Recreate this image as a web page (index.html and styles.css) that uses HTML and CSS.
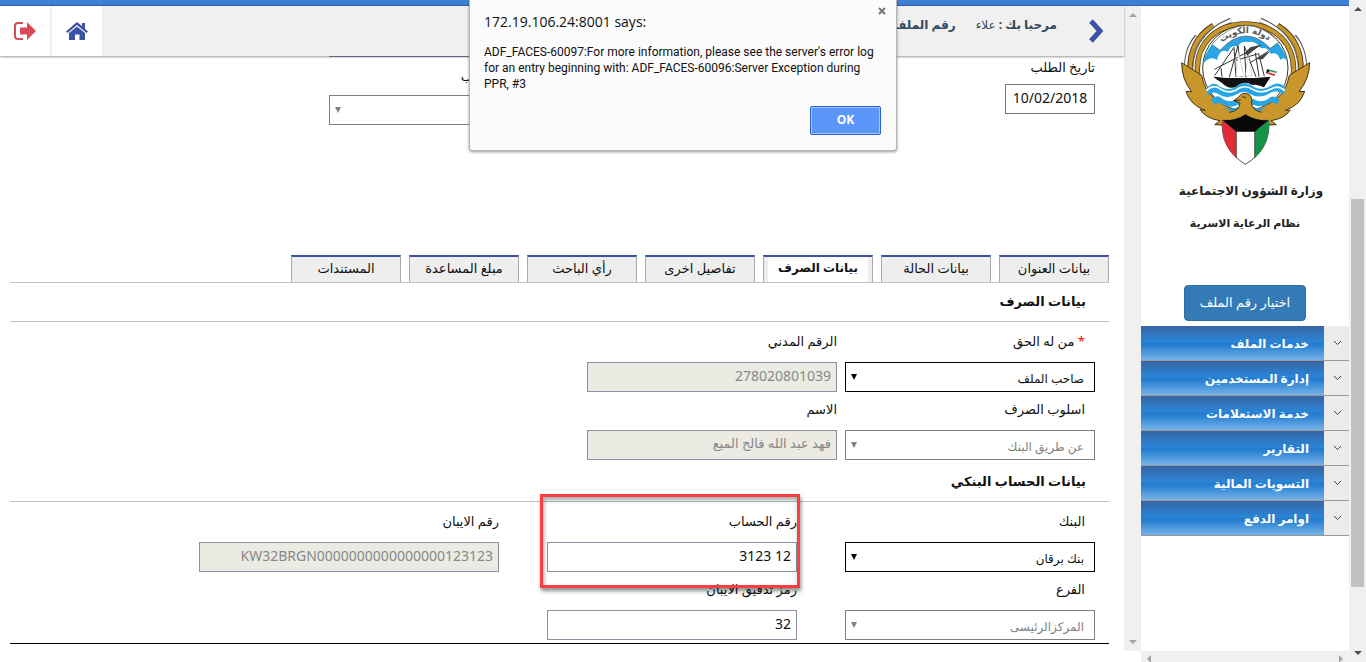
FILE: index.html
```html
<!DOCTYPE html>
<html lang="ar" dir="rtl">
<head>
<meta charset="utf-8">
<title>نظام الرعاية الاسرية</title>
<link rel="stylesheet" href="styles.css">
</head>
<body>
<div class="shell">
  <div class="scroll scroll-page">
    <svg class="arrow dark" viewBox="0 0 8 4"><path d="M4 0L8 4H0z"/></svg>
    <div class="thumb"></div>
    <svg class="arrow dark" viewBox="0 0 8 4"><path d="M0 0H8L4 4z"/></svg>
  </div>
  <div class="page">
    <div class="topline"></div>
    <div class="columns">
      <aside class="sidebar">
        <div class="brand">
          <svg class="emblem" viewBox="112 45 405 456" role="img" aria-label="شعار دولة الكويت">
            <g fill="none" stroke-linecap="butt">
              <path d="M138 222Q130 155 168 108" stroke="#555" stroke-width="13"/><path d="M138 220Q130 155 168 110" stroke="#fff" stroke-width="7"/>
              <path d="M491 222Q499 155 461 108" stroke="#555" stroke-width="13"/><path d="M491 220Q499 155 461 110" stroke="#fff" stroke-width="7"/>
              <path d="M150 232Q138 125 218 76" stroke="#443414" stroke-width="16"/><path d="M150 232Q138 125 218 77" stroke="#c8962b" stroke-width="12"/>
              <path d="M479 232Q491 125 411 76" stroke="#443414" stroke-width="16"/><path d="M479 232Q491 125 411 77" stroke="#c8962b" stroke-width="12"/>
              <path d="M163 240Q150 110 270 60" stroke="#555" stroke-width="14"/><path d="M163 240Q150 110 270 61" stroke="#fff" stroke-width="9"/>
              <path d="M466 240Q479 110 359 60" stroke="#555" stroke-width="14"/><path d="M466 240Q479 110 359 61" stroke="#fff" stroke-width="9"/>
              <path d="M174 250C150 120 240 72 314 72S478 120 455 250" stroke="#443414" stroke-width="16"/>
              <path d="M174 250C150 120 240 72 314 72S478 120 455 250" stroke="#c8962b" stroke-width="12"/>
            </g>
            <path d="M123 188L183 226Q200 320 314 322T446 226L507 188Q506 238 475 275L492 274Q480 315 434 331L449 330Q432 356 391 362L407 374Q350 382 314 345Q278 382 222 374L238 362Q197 356 178 329L194 331Q148 315 136 274L153 275Q123 238 123 188z" fill="#c8962b" stroke="#443414" stroke-width="3"/>
            <circle cx="314" cy="204" r="128" fill="#fff" stroke="#443414" stroke-width="3"/>
            <path d="M187 190A130 130 0 0 1 442 190Q433 166 419 180Q411 153 390 162Q382 140 361 145Q346 121 322 126Q300 122 291 140Q270 132 262 156Q238 143 229 180Q211 165 187 190z" fill="#28a5e4"/>
            <path d="M213 133Q314 23 415 126L389 145Q314 68 238 151z" fill="#fff" stroke="#555" stroke-width="2"/>
            <path id="ribbon" d="M222 146Q314 56 406 140" fill="none"/>
            <text class="emblem-name" text-anchor="middle"><textPath href="#ribbon" startOffset="50%">دولة الكويت</textPath></text>
            <path d="M197 266Q217 240 239 260Q268 276 294 254Q314 242 334 257Q361 277 391 257Q414 242 435 263L427 285Q407 265 385 281Q356 298 328 282Q309 270 288 283Q259 300 234 283Q217 271 204 287z" fill="#28a5e4"/>
            <path d="M197 272Q220 250 242 269Q270 284 294 265Q314 254 336 268Q361 284 391 267Q414 254 432 272" fill="none" stroke="#fff" stroke-width="5"/>
            <path d="M211 299Q229 279 248 298Q268 310 291 297L338 297Q361 311 382 297Q399 281 417 300L407 314Q392 299 377 314Q360 323 338 314L292 314Q268 327 245 313Q235 305 222 314z" fill="#28a5e4"/>
            <path d="M243 322Q270 334 298 318L334 318Q360 334 386 322Q350 339 314 338Q270 338 243 322z" fill="#28a5e4"/>
            <path d="M218 230L258 234H344L390 230L370 262Q350 252 334 255Q310 240 286 260Q265 270 244 249L225 236z" fill="#111"/>
            <path d="M221 208L360 136M222 227L280 142L286 231M266 232L292 137L302 231M316 232L311 138L346 231M344 158L355 230M286 181L354 161L371 229M241 205L244 230M318 195L384 153" fill="none" stroke="#333" stroke-width="3"/>
            <path d="M311 160L329 142L360 134L321 166zM344 178L389 153L366 178z" fill="#444"/>
            <path d="M293 154L310 229H286zM322 163L335 227H314z" fill="#fff" stroke="#888" stroke-width="1"/>
            <path d="M380 207L410 215L401 228L376 219z" fill="#fff"/><path d="M380 207L410 215L407 219L378 211z" fill="#16924a"/><path d="M376 219L401 228L404 223L378 215z" fill="#df2937"/><path d="M380 207L388 214L376 219z" fill="#111"/>
            <path d="M279 302L294 291Q304 276 322 282Q336 288 333 310Q334 329 362 337L342 357H286L266 337Q296 333 298 309z" fill="#c8962b"/>
            <path d="M266 337Q296 333 298 309L279 302L294 291Q304 276 322 282Q336 288 333 310Q334 329 362 337M279 302L300 300M304 290L317 293" fill="none" stroke="#443414" stroke-width="3"/>
            <path d="M245 361L384 361Q392 447 314 493Q238 447 245 361z" fill="#fff" stroke="#555" stroke-width="3"/>
            <path d="M245 361L287 394V474Q240 430 245 361z" fill="#e12c36"/><path d="M384 361L342 394V474Q390 430 384 361z" fill="#159448"/>
            <path d="M287 394V474M342 394V474" stroke="#222" stroke-width="2"/>
            <path d="M245 361Q288 362 314 343Q342 362 384 361L342 395H287z" fill="#080808"/>
          </svg>
          <strong class="ministry">وزارة الشؤون الاجتماعية</strong>
          <strong class="system">نظام الرعاية الاسرية</strong>
          <button class="pick" type="button">اختيار رقم الملف</button>
        </div>
        <nav class="menu">
          <a href="#"><svg viewBox="0 0 9 6"><path d="M1 1L4.500 4.500L8 1"/></svg><span>خدمات الملف</span></a>
          <a href="#"><svg viewBox="0 0 9 6"><path d="M1 1L4.500 4.500L8 1"/></svg><span>إدارة المستخدمين</span></a>
          <a href="#"><svg viewBox="0 0 9 6"><path d="M1 1L4.500 4.500L8 1"/></svg><span>خدمة الاستعلامات</span></a>
          <a href="#"><svg viewBox="0 0 9 6"><path d="M1 1L4.500 4.500L8 1"/></svg><span>التقارير</span></a>
          <a href="#"><svg viewBox="0 0 9 6"><path d="M1 1L4.500 4.500L8 1"/></svg><span>التسويات المالية</span></a>
          <a href="#"><svg viewBox="0 0 9 6"><path d="M1 1L4.500 4.500L8 1"/></svg><span>اوامر الدفع</span></a>
        </nav>
        <div class="scroll-across">
          <svg viewBox="0 0 4 8"><path d="M0 0L4 4L0 8z"/></svg>
          <svg viewBox="0 0 4 8"><path d="M4 0V8L0 4z"/></svg>
        </div>
      </aside>
      <div class="scroll scroll-main">
        <svg class="arrow" viewBox="0 0 8 4"><path d="M4 0L8 4H0z"/></svg>
        <svg class="arrow" viewBox="0 0 8 4"><path d="M0 0H8L4 4z"/></svg>
      </div>
      <main class="main">
        <header class="header">
          <button class="toggle" type="button" aria-label="القائمة"><svg viewBox="0 0 16 24"><path d="M3 2L12 12L3 22" fill="none" stroke="#3b53a4" stroke-width="5"/></svg></button>
          <p class="hello"><b>مرحبا بك :</b> علاء</p>
          <p class="file"><b>رقم الملف</b></p>
          <a class="tool" href="#" aria-label="الرئيسية"><svg viewBox="0 0 22 18"><path d="M11 0L16 4V1H19V7L22 9.500L20.500 11L11 3L1.500 11L0 9.500z" fill="#3b53a4"/><path d="M11 4.500L19 11V18H13.500V12.500H9V18H3V11z" fill="#3b53a4"/></svg></a>
          <a class="tool" href="#" aria-label="خروج"><svg viewBox="0 0 22 18"><path d="M9 1H4Q1 1 1 4V14Q1 17 4 17H9" fill="none" stroke="#d84a58" stroke-width="2"/><path d="M6 5.500H13V0L22 9L13 18V12.500H6z" fill="#d84a58"/></svg></a>
        </header>

        <form class="content">
          <div class="request">
            <div class="request-date">
              <label for="date">تاريخ الطلب</label>
              <input id="date" class="control date" value="10/02/2018">
            </div>
            <div class="request-kind">
              <div class="cut-line"></div>
              <label for="kind">ب</label>
              <div class="pick-box off"><select id="kind" class="control" disabled><option></option></select></div>
            </div>
          </div>

          <div class="tabs" role="tablist">
            <button type="button" role="tab">بيانات العنوان</button>
            <button type="button" role="tab">بيانات الحالة</button>
            <button type="button" role="tab" class="active" aria-selected="true">بيانات الصرف</button>
            <button type="button" role="tab">تفاصيل اخرى</button>
            <button type="button" role="tab">رأي الباحث</button>
            <button type="button" role="tab">مبلغ المساعدة</button>
            <button type="button" role="tab">المستندات</button>
          </div>

          <section class="panel">
            <h2 class="title">بيانات الصرف</h2>
            <div class="fields payee">
              <div class="field lead">
                <label for="owner"><span class="req">*</span> من له الحق</label>
                <div class="pick-box"><select id="owner" class="control"><option>صاحب الملف</option></select></div>
              </div>
              <div class="field">
                <label for="civil">الرقم المدني</label>
                <input id="civil" class="control" value="278020801039" disabled>
              </div>
              <div class="field lead">
                <label for="method">اسلوب الصرف</label>
                <div class="pick-box off"><select id="method" class="control" disabled><option>عن طريق البنك</option></select></div>
              </div>
              <div class="field">
                <label for="name">الاسم</label>
                <input id="name" class="control words" value="فهد عبد الله فالح الميع" disabled>
              </div>
            </div>
            <h2 class="title tall">بيانات الحساب البنكي</h2>
            <div class="fields bank">
              <div class="field lead">
                <label for="bank">البنك</label>
                <div class="pick-box"><select id="bank" class="control"><option>بنك برقان</option></select></div>
              </div>
              <div class="field marked">
                <label for="account">رقم الحساب</label>
                <input id="account" class="control" value="12 3123">
              </div>
              <div class="field">
                <label for="iban">رقم الايبان</label>
                <input id="iban" class="control" value="KW32BRGN0000000000000000123123" disabled>
              </div>
              <div class="field lead">
                <label for="branch">الفرع</label>
                <div class="pick-box off"><select id="branch" class="control" disabled><option>المركزالرئيسى</option></select></div>
              </div>
              <div class="field">
                <label for="check">رمز تدقيق الايبان</label>
                <input id="check" class="control" value="32">
              </div>
            </div>
          </section>
        </form>
      </main>
    </div>
  </div>
</div>

<div class="dialog" role="alertdialog" dir="ltr" lang="en" aria-labelledby="says">
  <button class="close" type="button" aria-label="Close"><svg viewBox="0 0 8 8"><path d="M1 1L7 7M7 1L1 7" stroke="#777" stroke-width="2"/></svg></button>
  <h1 id="says">172.19.106.24:8001 says:</h1>
  <p>ADF_FACES-60097:For more information, please see the server's error log<br>for an entry beginning with: ADF_FACES-60096:Server Exception during<br>PPR, #3</p>
  <button class="ok" type="button">OK</button>
</div>
</body>
</html>
```

FILE: styles.css
```css
* { box-sizing: border-box; }

body {
  margin: 0;
  background: #fff;
  color: #111;
  font: 13px/20px "Noto Sans", "DejaVu Sans", sans-serif;
}

button, input, select { font: inherit; color: inherit; }
button { cursor: pointer; }
p, h1, h2 { margin: 0; }
svg { display: block; }

.shell { display: flex; height: 100vh; overflow: hidden; }
.page { flex: 1; min-width: 0; display: flex; flex-direction: column; }
.topline { height: 6px; flex: none; background: #3f7fd3; border-bottom: 1px solid #2f62ad; }
.columns { flex: 1; min-height: 0; display: flex; }

/* scroll bars */
.scroll {
  width: 17px;
  flex: none;
  display: flex;
  flex-direction: column;
  align-items: center;
  justify-content: space-between;
  background: #f0f0f0;
}
.scroll-page { padding: 7px 0; }
.scroll-main { padding: 7px 0; margin-bottom: 11px; }
.arrow { width: 8px; height: 4px; fill: #a3a3a3; }
.arrow.dark { fill: #505050; }
.thumb { width: 13px; height: 60%; background: #c1c1c1; margin-top: 124px; }
.scroll-across {
  margin-top: auto;
  height: 11px;
  padding: 4px 6px 0;
  display: flex;
  justify-content: space-between;
  background: #f0f0f0;
  overflow: hidden;
}
.scroll-across svg { width: 4px; height: 8px; fill: #a3a3a3; }

/* side bar */
.sidebar { width: 208px; flex: none; display: flex; flex-direction: column; }
.brand { display: flex; flex-direction: column; align-items: center; padding: 9px 0 5px; }
.emblem { width: 135px; height: 152px; }
.emblem-name { font: bold 26px "DejaVu Sans", sans-serif; fill: #555; }
.ministry {
  margin: 12px 0 0 12px;
  font-size: 12px;
  line-height: 24px;
  white-space: nowrap;
  color: #222;
}
.system { margin-top: 8px; font-size: 11px; line-height: 24px; color: #222; }
.pick {
  width: 122px;
  height: 36px;
  margin-top: 50px;
  padding: 0 0 3px;
  border: 1px solid #2e6da4;
  border-radius: 4px;
  background: #337ab7;
  color: #fff;
  white-space: nowrap;
}
.menu a {
  display: flex;
  align-items: center;
  height: 35px;
  background: #ebebeb;
  border-bottom: 1px solid #999;
  color: #fff;
  font-size: 12px;
  font-weight: bold;
  text-decoration: none;
}
.menu svg { width: 9px; height: 6px; margin: 0 7px 0 9px; fill: none; stroke: #444; stroke-width: 1; }
.menu span {
  flex: 1;
  padding: 2px 15px 0 0;
  line-height: 32px;
  background: linear-gradient(#3765a5, #2a86d8 48%, #2079cd 50%, #2c83d3 60%, #76b2e8);
}

/* header */
.main { flex: 1; min-width: 0; }
.header {
  position: relative;
  z-index: 1;
  display: flex;
  height: 50px;
  padding-right: 20px;
  background: #f0f0f0;
  box-shadow: 0 1px 2px rgba(0, 0, 0, .4);
  color: #34495e;
}
.toggle { width: 16px; padding: 0; border: 0; background: none; }
.toggle svg { width: 16px; height: 24px; }
.header p { font-size: 12px; line-height: 38px; white-space: nowrap; }
.hello { margin-right: 31px; }
.file { margin-right: 20px; margin-left: auto; }
.tool {
  width: 50px;
  display: flex;
  align-items: center;
  justify-content: center;
  background: #fff;
}
.tool + .tool { margin-right: 2px; }
.tool svg { width: 22px; height: 18px; }

/* form */
.content { padding: 0 15px 0 10px; }
.request { display: flex; justify-content: space-between; height: 199px; padding-right: 14px; }
.request-date { padding-top: 2px; }
.request-date label { display: block; line-height: 18px; margin-bottom: 8px; }
.control {
  display: block;
  width: 100%;
  height: 30px;
  padding: 0 5px 4px;
  border: 1px solid #8f92a5;
  border-radius: 0;
  background: #fff;
  font-size: 14px;
  appearance: none;
}
.control.words { font-size: 13px; }
.control:disabled { background: #ebebe4; color: #888; opacity: 1; }
.control.date { width: 90px; border-color: #777; padding-bottom: 3px; text-align: center; }
.request-kind { width: 250px; margin-left: 319px; }
.request-kind label { display: block; line-height: 38px; padding-right: 106px; }
.cut-line { height: 1px; background: #66677f; position: relative; z-index: 2; }
.pick-box { position: relative; }
.pick-box::after {
  content: "";
  position: absolute;
  left: 6px;
  top: 12px;
  border: solid transparent;
  border-width: 6px 3px 0;
  border-top-color: #000;
}
.pick-box select { border-color: #000; padding: 4px 10px 0 20px; font-size: 12px; }
.pick-box.off::after { border-top-color: #808080; }
.pick-box.off select { background: #fff; border-color: #808080; color: #808080; }

.tabs { display: flex; gap: 8px; border-bottom: 1px solid #c4c4c4; }
.tabs button {
  width: 110px;
  height: 27px;
  padding: 0 0 4px;
  border: 1px solid #aaa;
  border-top: 2px solid #3b53a4;
  border-bottom: 0;
  background: #eee;
  white-space: nowrap;
}
.tabs .active {
  background: linear-gradient(to right, #eee 4px, #fff 4px, #fff calc(100% - 4px), #eee calc(100% - 4px));
  font-size: 12px;
  font-weight: bold;
}

.panel { border-bottom: 1px solid #000; padding-bottom: 3px; }
.title {
  height: 39px;
  padding-right: 23px;
  border-bottom: 1px solid #bcc4c6;
  font-size: 13px;
  line-height: 36px;
}
.title.tall { height: 42px; line-height: 42px; }
.fields { display: grid; padding: 2px 14px 0 0; justify-content: start; }
.payee { grid-template-columns: 250px 250px; column-gap: 8px; }
.bank { grid-template-columns: 250px 250px 300px; column-gap: 48px; }
.field label { display: block; height: 38px; line-height: 34px; }
.field.lead label { padding-right: 10px; }
.req { color: #f00; }
.marked { position: relative; }
.marked::after {
  content: "";
  position: absolute;
  inset: -10px -3px -16px -7px;
  border: 3px solid #f84040;
  box-shadow: 1px 3px 4px rgba(0, 0, 0, .45), inset 1px 3px 4px rgba(0, 0, 0, .35);
  pointer-events: none;
}

/* browser message */
.dialog {
  position: absolute;
  z-index: 5;
  top: 0;
  left: 0;
  right: 0;
  width: 428px;
  margin: 0 auto;
  padding: 12px 14px 15px;
  display: flex;
  flex-direction: column;
  background: #fbfbfb;
  border: 1px solid #b5b5b5;
  border-top: 0;
  border-radius: 0 0 3px 3px;
  box-shadow: 0 1px 3px rgba(0, 0, 0, .4);
  font-family: "Open Sans", "Noto Sans", sans-serif;
}
.dialog h1 { font-size: 14px; font-weight: normal; line-height: 20px; }
.dialog p { margin-top: 12px; font: 12px/16px Roboto, sans-serif; white-space: nowrap; }
.close { position: absolute; top: 7px; right: 10px; padding: 0; border: 0; background: none; }
.close svg { width: 8px; height: 8px; }
.ok {
  align-self: flex-end;
  width: 71px;
  height: 29px;
  margin: 14px 1px 0 0;
  padding: 0 0 2px;
  border: 1px solid #2a62d0;
  border-radius: 2px;
  background: #5b96fb;
  box-shadow: inset 0 0 0 1px #a5c6fd;
  color: #fff;
  font-size: 12px;
  font-weight: bold;
}
```
